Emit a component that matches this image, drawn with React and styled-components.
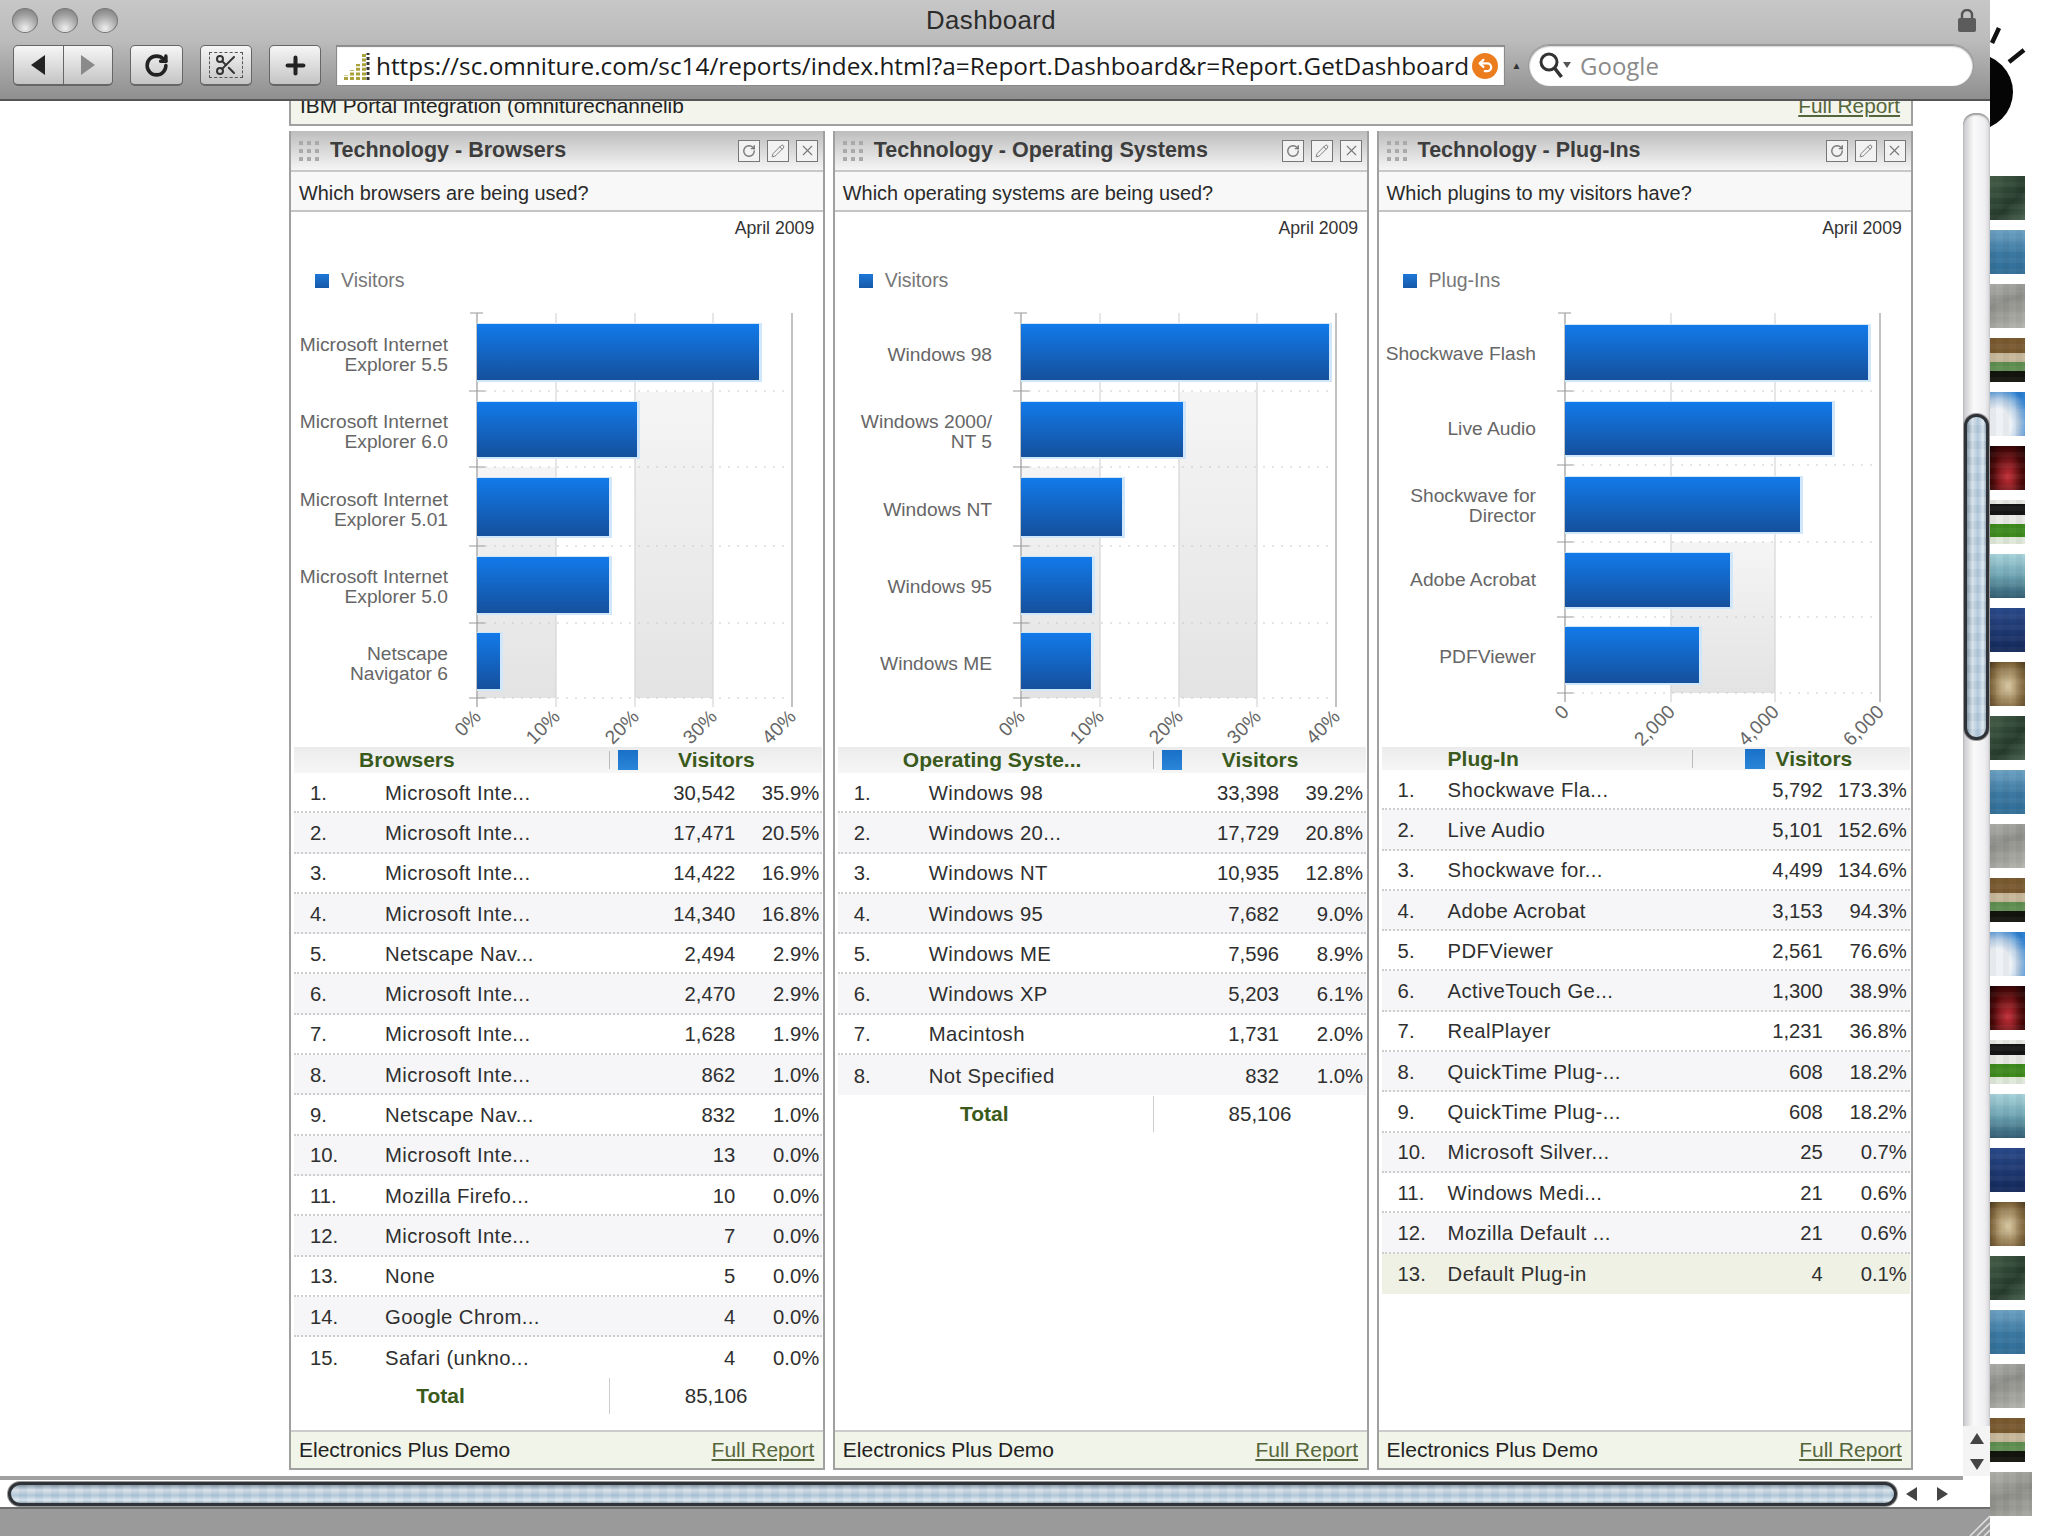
import styled, { createGlobalStyle, css } from "styled-components";
import { RotateCw, Scissors, Plus, Pencil, X, Undo2 } from "lucide-react";

const GlobalStyle = createGlobalStyle`
    html, body {
        margin: 0;
        padding: 0;
        background: #fff;
        font-family: "Liberation Sans", Arial, sans-serif;
    }
    * { box-sizing: border-box; }
`

const browsers = [
    ["Microsoft Inte...", "30,542", "35.9%"],
    ["Microsoft Inte...", "17,471", "20.5%"],
    ["Microsoft Inte...", "14,422", "16.9%"],
    ["Microsoft Inte...", "14,340", "16.8%"],
    ["Netscape Nav...", "2,494", "2.9%"],
    ["Microsoft Inte...", "2,470", "2.9%"],
    ["Microsoft Inte...", "1,628", "1.9%"],
    ["Microsoft Inte...", "862", "1.0%"],
    ["Netscape Nav...", "832", "1.0%"],
    ["Microsoft Inte...", "13", "0.0%"],
    ["Mozilla Firefo...", "10", "0.0%"],
    ["Microsoft Inte...", "7", "0.0%"],
    ["None", "5", "0.0%"],
    ["Google Chrom...", "4", "0.0%"],
    ["Safari (unkno...", "4", "0.0%"],
]

const systems = [
    ["Windows 98", "33,398", "39.2%"],
    ["Windows 20...", "17,729", "20.8%"],
    ["Windows NT", "10,935", "12.8%"],
    ["Windows 95", "7,682", "9.0%"],
    ["Windows ME", "7,596", "8.9%"],
    ["Windows XP", "5,203", "6.1%"],
    ["Macintosh", "1,731", "2.0%"],
    ["Not Specified", "832", "1.0%"],
]

const plugins = [
    ["Shockwave Fla...", "5,792", "173.3%"],
    ["Live Audio", "5,101", "152.6%"],
    ["Shockwave for...", "4,499", "134.6%"],
    ["Adobe Acrobat", "3,153", "94.3%"],
    ["PDFViewer", "2,561", "76.6%"],
    ["ActiveTouch Ge...", "1,300", "38.9%"],
    ["RealPlayer", "1,231", "36.8%"],
    ["QuickTime Plug-...", "608", "18.2%"],
    ["QuickTime Plug-...", "608", "18.2%"],
    ["Microsoft Silver...", "25", "0.7%"],
    ["Windows Medi...", "21", "0.6%"],
    ["Mozilla Default ...", "21", "0.6%"],
    ["Default Plug-in", "4", "0.1%"],
]

// row geometry is read off the reference, y values are page pixels
const percentRows = [
    { top: 324, h: 56, mid: 355, line: 391 },
    { top: 402, h: 55, mid: 432, line: 467 },
    { top: 478, h: 58, mid: 510, line: 546 },
    { top: 557, h: 56, mid: 587, line: 623 },
    { top: 633, h: 56, mid: 664, line: 698 },
]

const pluginRows = [
    { top: 325, h: 55, mid: 354, line: 391 },
    { top: 402, h: 53, mid: 429, line: 465 },
    { top: 477, h: 55, mid: 506, line: 542 },
    { top: 553, h: 54, mid: 580, line: 617 },
    { top: 627, h: 56, mid: 657, line: 693 },
]

const percentTicks = [
    { x: 187, label: "0%" },
    { x: 266, label: "10%" },
    { x: 345, label: "20%" },
    { x: 423, label: "30%" },
    { x: 502, label: "40%" },
]

const pluginTicks = [
    { x: 187, label: "0" },
    { x: 293, label: "2,000" },
    { x: 397, label: "4,000" },
    { x: 502, label: "6,000" },
]

const panels = [
    {
        title: "Technology - Browsers",
        question: "Which browsers are being used?",
        legend: "Visitors",
        column: "Browsers",
        rows: browsers,
        total: "85,106",
        rowsChart: percentRows,
        ticks: percentTicks,
        bands: [
            { x: 345, w: 78, y: 392, h: 306 },
            { x: 187, w: 79, y: 467, h: 231 },
        ],
        bars: [
            { w: 282, label: ["Microsoft Internet", "Explorer 5.5"] },
            { w: 160, label: ["Microsoft Internet", "Explorer 6.0"] },
            { w: 132, label: ["Microsoft Internet", "Explorer 5.01"] },
            { w: 132, label: ["Microsoft Internet", "Explorer 5.0"] },
            { w: 23, label: ["Netscape", "Navigator 6"] },
        ],
    },
    {
        title: "Technology - Operating Systems",
        question: "Which operating systems are being used?",
        legend: "Visitors",
        column: "Operating Syste...",
        rows: systems,
        total: "85,106",
        rowsChart: percentRows,
        ticks: percentTicks,
        bands: [
            { x: 345, w: 78, y: 392, h: 306 },
            { x: 187, w: 79, y: 467, h: 231 },
        ],
        bars: [
            { w: 308, label: ["Windows 98"] },
            { w: 162, label: ["Windows 2000/", "NT 5"] },
            { w: 101, label: ["Windows NT"] },
            { w: 71, label: ["Windows 95"] },
            { w: 70, label: ["Windows ME"] },
        ],
    },
    {
        title: "Technology - Plug-Ins",
        question: "Which plugins to my visitors have?",
        legend: "Plug-Ins",
        column: "Plug-In",
        rows: plugins,
        compact: true,
        rowsChart: pluginRows,
        ticks: pluginTicks,
        bands: [{ x: 293, w: 104, y: 542, h: 151 }],
        bars: [
            { w: 303, label: ["Shockwave Flash"] },
            { w: 267, label: ["Live Audio"] },
            { w: 235, label: ["Shockwave for", "Director"] },
            { w: 165, label: ["Adobe Acrobat"] },
            { w: 134, label: ["PDFViewer"] },
        ],
    },
]

const scenes = [
    "linear-gradient(135deg,#46604a,#263a2b 60%,#4a6350)",
    "linear-gradient(180deg,#6fa3c4,#3d7aa3 50%,#2f6d96)",
    "linear-gradient(160deg,#b0b0ac,#8e8e8a 40%,#b6b6b0)",
    "linear-gradient(180deg,#7a5a30 0 35%,#c7b79a 35% 55%,#5f8f50 55% 75%,#14140f 75%)",
    "radial-gradient(ellipse at 20% 75%,#eef2f6 0 35%,#b4cce4 55%,#2a7fd0 85%)",
    "radial-gradient(ellipse at 50% 70%,#c8303a,#4a0808 60%,#1a0406)",
    "linear-gradient(180deg,#e8e8e4 0 10%,#151515 10% 35%,#e8e8e4 35% 55%,#3e8a1e 55% 85%,#dfe8d8 85%)",
    "linear-gradient(180deg,#a8d4dc,#6ea4b2 50%,#2c5a70)",
    "linear-gradient(180deg,#2a4a8a,#13285a)",
    "radial-gradient(ellipse at 50% 55%,#e0cfa8,#7c6238 70%,#4a3a20)",
]

const thumbs = Array.from({ length: 24 }, (_, i) => scenes[i % 10])

function Chart({ data, index }) {
    const x0 = data.ticks[0].x
    const xEnd = data.ticks[data.ticks.length - 1].x
    const axisEnd = data.rowsChart[4].line
    return (
        <ChartSvg viewBox="1 300 532 447" width="532" height="447">
            <defs>
                <linearGradient id={"bar" + index} x1="0" y1="0" x2="0" y2="1">
                    <stop offset="0" stopColor="#127aea" />
                    <stop offset="1" stopColor="#15509c" />
                </linearGradient>
                <linearGradient id={"band" + index} x1="0" y1="0" x2="0" y2="1">
                    <stop offset="0" stopColor="#f5f5f5" />
                    <stop offset="1" stopColor="#e3e3e4" />
                </linearGradient>
            </defs>
            {data.bands.map((b, i) => (
                <rect key={i} x={b.x} y={b.y} width={b.w} height={b.h} fill={`url(#band${index})`} />
            ))}
            {data.ticks.map((t, i) => (
                <line key={i} x1={t.x} y1="313" x2={t.x} y2={axisEnd + 9}
                      stroke={i === data.ticks.length - 1 || i === 0 ? "#9a9a9a" : "#d6d6d6"}
                      strokeWidth="1.2" />
            ))}
            <line x1={x0 - 7} y1="313" x2={x0 + 6} y2="313" stroke="#999" />
            {data.rowsChart.map((r, i) => (
                <g key={i}>
                    <line x1={x0 - 8} y1={r.line} x2={x0 + 8} y2={r.line} stroke="#999" />
                    <line x1={x0 + 8} y1={r.line} x2={xEnd - 3} y2={r.line} stroke="#c9c9c9"
                          strokeDasharray="2 7" />
                </g>
            ))}
            {data.bars.map((bar, i) => {
                const r = data.rowsChart[i]
                return (
                    <g key={i}>
                        <rect x={x0} y={r.top - 1} width={bar.w + 3} height={r.h + 3} fill="#cfe6fb" />
                        <rect x={x0} y={r.top} width={bar.w} height={r.h} fill={`url(#bar${index})`} />
                        {bar.label.map((line, j) => (
                            <ChartLabel key={j} x={x0 - 29} textAnchor="end"
                                        y={r.mid + 6 + (j - (bar.label.length - 1) / 2) * 20.5}>
                                {line}
                            </ChartLabel>
                        ))}
                    </g>
                )
            })}
            {data.ticks.map((t, i) => (
                <ChartLabel key={i} textAnchor="end" x={t.x + 5} y={axisEnd + 20}
                            transform={`rotate(-45 ${t.x + 5} ${axisEnd + 20})`}>
                    {t.label}
                </ChartLabel>
            ))}
        </ChartSvg>
    )
}

function Panel({ data, index }) {
    return (
        <PanelBox>
            <PanelHeader>
                <DragDots>
                    {Array.from({ length: 9 }, (_, i) => <i key={i} />)}
                </DragDots>
                <PanelTitle>{data.title}</PanelTitle>
                <PanelButtons>
                    <PanelButton><RotateCw size={14} strokeWidth={2.4} /></PanelButton>
                    <PanelButton><Pencil size={14} strokeWidth={1.6} /></PanelButton>
                    <PanelButton><X size={17} strokeWidth={1.6} /></PanelButton>
                </PanelButtons>
            </PanelHeader>
            <Question>{data.question}</Question>
            <ChartBody>
                <ReportDate>April 2009</ReportDate>
                <Legend>
                    <LegendSwatch />
                    {data.legend}
                </Legend>
                <Chart data={data} index={index} />
            </ChartBody>
            <Table>
                <TableHead $compact={data.compact}>
                    <HeadName $compact={data.compact}>{data.column}</HeadName>
                    <HeadRule />
                    <HeadSwatch $compact={data.compact} />
                    <HeadName $metric $compact={data.compact}>Visitors</HeadName>
                </TableHead>
                {data.rows.map((row, i) => (
                    <Row key={i} $shaded={i % 2 === 1} $compact={data.compact}
                         $highlight={data.compact && i === data.rows.length - 1}>
                        <span>{i + 1}.</span>
                        <RowName>{row[0]}</RowName>
                        <Num>{row[1]}</Num>
                        <Num>{row[2]}</Num>
                    </Row>
                ))}
                {data.total && (
                    <TotalRow>
                        <TotalLabel>Total</TotalLabel>
                        <TotalRule />
                        <TotalValue>{data.total}</TotalValue>
                    </TotalRow>
                )}
            </Table>
            <PanelFooter>
                Electronics Plus Demo
                <FullReport href="#">Full Report</FullReport>
            </PanelFooter>
        </PanelBox>
    )
}

export default function App() {
    return (
        <Desktop>
            <GlobalStyle />
            <Window>
                <Toolbar>
                    <TitleBar>
                        <Lights><Light /><Light /><Light /></Lights>
                        <WindowTitle>Dashboard</WindowTitle>
                        <svg width="18" height="23" viewBox="0 0 18 23">
                            <path d="M4 10V6a5 5 0 0 1 10 0v4" fill="none" stroke="#555" strokeWidth="2.4" />
                            <rect x="0" y="9" width="18" height="14" rx="2" fill="#5c5c5c" />
                        </svg>
                    </TitleBar>
                    <NavRow>
                        <NavGroup>
                            <NavHalf>
                                <svg width="16" height="22" viewBox="0 0 16 22"><path d="M15 1v20L1 11z" fill="#222" /></svg>
                            </NavHalf>
                            <NavHalf $off>
                                <svg width="16" height="22" viewBox="0 0 16 22"><path d="M1 1v20l14-10z" fill="#8a8a8a" /></svg>
                            </NavHalf>
                        </NavGroup>
                        <NavButton $w={53}><RotateCw size={25} strokeWidth={3.4} color="#222" /></NavButton>
                        <NavButton $w={52}>
                            <ClipFrame><Scissors size={24} strokeWidth={2} color="#333" /></ClipFrame>
                        </NavButton>
                        <NavButton $w={52}><Plus size={27} strokeWidth={3.6} color="#222" /></NavButton>
                        <AddressBar>
                            <svg width="26" height="30" viewBox="0 0 26 30">
                                <path d="M2 29v-5M8 29v-10M14 29v-16M20 29V2" fill="none" stroke="#a9a23a" strokeWidth="4" strokeDasharray="3 1.6" />
                                <path d="M24 29V2" fill="none" stroke="#333" strokeWidth="3" strokeDasharray="3 2" />
                            </svg>
                            <AddressText>https://sc.omniture.com/sc14/reports/index.html?a=Report.Dashboard&amp;r=Report.GetDashboard</AddressText>
                            <SnapBack><Undo2 size={17} strokeWidth={3.2} color="#fff" /></SnapBack>
                        </AddressBar>
                        <Grip>▲</Grip>
                        <SearchBox>
                            <svg width="34" height="30" viewBox="0 0 34 30">
                                <circle cx="11" cy="11" r="8" fill="none" stroke="#333" strokeWidth="3" />
                                <path d="M16.5 17l7 9" stroke="#333" strokeWidth="3.6" />
                                <path d="M25 11h8l-4 6z" fill="#555" />
                            </svg>
                            <SearchText>Google</SearchText>
                        </SearchBox>
                    </NavRow>
                </Toolbar>
                <Body>
                    <Viewport>
                        <Page>
                            <TopStrip>
                                IBM Portal Integration (omniturechannelib
                                <FullReport href="#">Full Report</FullReport>
                            </TopStrip>
                            <Panels>
                                {panels.map((p, i) => <Panel key={i} data={p} index={i} />)}
                            </Panels>
                        </Page>
                        <HScroll>
                            <HThumb />
                            <ScrollArrows>
                                <svg width="12" height="14" viewBox="0 0 12 14"><path d="M11 0v14L0 7z" fill="#444" /></svg>
                                <svg width="12" height="14" viewBox="0 0 12 14"><path d="M1 0v14l11-7z" fill="#444" /></svg>
                            </ScrollArrows>
                        </HScroll>
                    </Viewport>
                    <VScroll>
                        <VGroove>
                            <VThumb />
                        </VGroove>
                        <VArrows>
                            <svg width="14" height="12" viewBox="0 0 14 12"><path d="M0 11h14L7 0z" fill="#444" /></svg>
                            <svg width="14" height="12" viewBox="0 0 14 12"><path d="M0 1h14L7 12z" fill="#444" /></svg>
                        </VArrows>
                    </VScroll>
                </Body>
                <StatusBar>
                    <svg width="22" height="22" viewBox="0 0 22 22">
                        <path d="M2 22L22 2M9 22L22 9M16 22l6-6" stroke="#ddd" strokeWidth="1.6" />
                    </svg>
                </StatusBar>
            </Window>
            <Backdrop>
                <svg width="58" height="131" viewBox="0 0 58 131">
                    <circle cx="-15" cy="92" r="38" fill="#050505" />
                    <path d="M2 43L9 28M19 62l15-12" stroke="#111" strokeWidth="4.5" />
                </svg>
                <ThumbList>
                    {thumbs.map((scene, i) => <Thumb key={i} $scene={scene} />)}
                    <Thumb $scene="linear-gradient(160deg,#b4b4ae,#8f8f8a 50%,#a8a8a2)" $wide />
                </ThumbList>
            </Backdrop>
        </Desktop>
    )
}

const Desktop = styled.div`
    display: flex;
    width: 2048px;
    height: 1536px;
    overflow: hidden;
    background: #fff;
`

const Window = styled.div`
    display: flex;
    flex-direction: column;
    width: 1990px;
    height: 1536px;
`

const Toolbar = styled.header`
    height: 101px;
    flex: none;
    padding: 0 14px 0 12px;
    background: linear-gradient(180deg, #c7c7c7 0%, #bcbcbc 40%, #8f8f8f 100%);
    border-bottom: 2px solid #555;
`

const TitleBar = styled.div`
    display: flex;
    align-items: center;
    justify-content: space-between;
    height: 41px;
    position: relative;
`

const Lights = styled.div`
    display: flex;
    gap: 14px;
`

const Light = styled.span`
    width: 26px;
    height: 25px;
    border-radius: 50%;
    border: 1.5px solid #777;
    background: radial-gradient(circle at 50% 85%, #eee, #a0a0a0 60%, #777);
`

const WindowTitle = styled.h1`
    position: absolute;
    left: 0;
    right: 6px;
    margin: 0;
    text-align: center;
    font-size: 25.8px;
    font-weight: 400;
    color: #2c2c2c;
    letter-spacing: 0.4px;
`

const NavRow = styled.div`
    display: flex;
    align-items: center;
    height: 43px;
    margin-top: 3px;
`

const NavGroup = styled.div`
    display: flex;
    width: 100px;
    height: 41px;
    margin-left: 1px;
    border: 1.5px solid #666;
    border-bottom-width: 2.5px;
    border-radius: 5px;
    overflow: hidden;
    background: linear-gradient(180deg, #f6f6f6, #c4c4c4);
`

const NavHalf = styled.span`
    flex: 1;
    display: flex;
    align-items: center;
    justify-content: center;
    ${p => p.$off ? css`border-left: 1.5px solid #666;` : ""}
`

const NavButton = styled.span`
    display: flex;
    align-items: center;
    justify-content: center;
    width: ${p => p.$w}px;
    height: 41px;
    margin-left: 17px;
    border: 1.5px solid #666;
    border-bottom-width: 2.5px;
    border-radius: 5px;
    background: linear-gradient(180deg, #f6f6f6, #c4c4c4);
`

const ClipFrame = styled.span`
    display: flex;
    align-items: center;
    justify-content: center;
    width: 34px;
    height: 26px;
    border: 1.5px dashed #555;
`

const AddressBar = styled.div`
    display: flex;
    align-items: center;
    width: 1167px;
    height: 39px;
    margin-left: 16px;
    padding-left: 7px;
    background: #fff;
    box-shadow: inset 0 1px 1px #888, 0 0 0 1px #8a8a8a;
`

const AddressText = styled.span`
    margin-left: 6px;
    font-family: "Open Sans", sans-serif;
    font-size: 24.35px;
    color: #1a1a1a;
    white-space: nowrap;
    width: 1093px;
    overflow: hidden;
`

const SnapBack = styled.span`
    display: flex;
    align-items: center;
    justify-content: center;
    width: 26px;
    height: 26px;
    margin-left: 3px;
    border-radius: 50%;
    background: #ec7d1f;
`

const Grip = styled.span`
    width: 25px;
    text-align: center;
    font-size: 10px;
    color: #333;
`

const SearchBox = styled.div`
    display: flex;
    align-items: center;
    width: 444px;
    height: 41px;
    padding-left: 9px;
    border-radius: 21px;
    background: #fff;
    box-shadow: inset 0 1px 2px #777, 0 0 0 1px #999;
`

const SearchText = styled.span`
    margin-left: 8px;
    font-family: "Open Sans", sans-serif;
    font-size: 24px;
    color: #8b8b8b;
`

const Body = styled.div`
    flex: 1;
    display: flex;
    min-height: 0;
`

const Viewport = styled.div`
    flex: 1;
    display: flex;
    flex-direction: column;
    min-width: 0;
`

const Page = styled.main`
    flex: 1;
    padding-left: 289px;
    min-height: 0;
    overflow: hidden;
`

const TopStrip = styled.div`
    display: flex;
    align-items: flex-end;
    justify-content: space-between;
    width: 1624px;
    height: 25px;
    padding: 0 11px 9px 9px;
    background: #f3f5ec;
    border: 2px solid #a0a0a0;
    border-width: 0 2px 2px;
    font-size: 20.8px;
    line-height: 18px;
    color: #222;
    overflow: hidden;
`

const Panels = styled.div`
    display: grid;
    grid-template-columns: repeat(3, 536.3px);
    column-gap: 7.5px;
    height: 1339px;
    margin-top: 5px;
`

const PanelBox = styled.section`
    display: flex;
    flex-direction: column;
    background: #fff;
    border: 2px solid #a0a0a0;
    border-top: 0;
`

const PanelHeader = styled.div`
    display: flex;
    align-items: center;
    flex: none;
    height: 41px;
    padding: 0 5px 0 8px;
    background: linear-gradient(180deg, #bdbdbd, #f5f5f5);
    border-bottom: 2px solid #c8c8c8;
`

const DragDots = styled.span`
    display: grid;
    grid-template-columns: repeat(3, 4px);
    gap: 4px;
    margin-right: 11px;
    & > i {
        width: 4px;
        height: 4px;
        background: #aaa;
    }
`

const PanelTitle = styled.h2`
    flex: 1;
    margin: 0;
    font-size: 21.5px;
    font-weight: 700;
    color: #3d3d3d;
`

const PanelButtons = styled.div`
    display: flex;
    gap: 7px;
`

const PanelButton = styled.span`
    display: flex;
    align-items: center;
    justify-content: center;
    width: 22px;
    height: 22px;
    border: 1.5px solid #777;
    background: #f2f2f2;
    color: #777;
`

const Question = styled.div`
    flex: none;
    height: 40px;
    padding: 4px 8px 0;
    line-height: 34px;
    font-size: 19.9px;
    color: #2a2a2a;
    background: #f8f8f8;
    border-bottom: 2px solid #c4c4c4;
`

const ChartBody = styled.div`
    flex: none;
    height: 535px;
    display: flex;
    flex-direction: column;
`

const ReportDate = styled.div`
    height: 30px;
    padding: 1px 9px 0 0;
    text-align: right;
    line-height: 30px;
    font-size: 17.7px;
    color: #333;
`

const Legend = styled.div`
    display: flex;
    align-items: center;
    height: 58px;
    padding: 19px 0 0 24px;
    font-size: 19.5px;
    color: #777;
`

const LegendSwatch = styled.span`
    width: 14px;
    height: 14px;
    margin-right: 12px;
    background: linear-gradient(180deg, #1e78d8, #1558a8);
`

const ChartSvg = styled.svg`
    display: block;
    flex: none;
    overflow: visible;
`

const ChartLabel = styled.text`
    font-family: "Liberation Sans", Arial, sans-serif;
    font-size: 19.2px;
    fill: #666;
`

const Table = styled.div`
    flex: 1;
    min-height: 0;
    margin: 0 1px 0 3px;
`

const TableHead = styled.div`
    display: flex;
    align-items: center;
    height: ${p => p.$compact ? 23 : 26}px;
    background: linear-gradient(180deg, #ececec, #f6f6f6);
`

const HeadName = styled.span`
    font-size: 21px;
    font-weight: 700;
    color: #3a5a1c;
    white-space: nowrap;
    ${p => p.$metric
        ? css`margin-left: ${p.$compact ? 11 : 40}px;`
        : css`width: ${p.$compact ? 244 : 250}px; margin-left: ${p.$compact ? 66 : 65}px;`}
`

const HeadRule = styled.span`
    width: 1px;
    height: 18px;
    background: #bbb;
`

const HeadSwatch = styled.span`
    width: 20px;
    height: 20px;
    margin-left: ${p => p.$compact ? 52 : 8}px;
    background: linear-gradient(180deg, #1a70c8, #2a86d8);
`

const Row = styled.div`
    display: grid;
    grid-template-columns: ${p => p.$compact ? "50px 1fr" : "75px 1fr"} 110px 84px;
    align-items: center;
    height: 40.3px;
    padding: 2px 3px 0 16px;
    font-size: 20.3px;
    color: #2f2f2f;
    background: ${p => p.$highlight ? "#eef1e3" : p.$shaded ? "#f6f6f8" : "#fff"};
    border-bottom: ${p => p.$highlight ? "none" : "2px dotted #cdcdcd"};
    &:nth-last-child(2) { border-bottom: ${p => p.$compact ? "" : "none"}; }
`

const RowName = styled.span`
    letter-spacing: 0.4px;
`

const Num = styled.span`
    text-align: right;
`

const TotalRow = styled.div`
    display: grid;
    grid-template-columns: 315px 1px 1fr;
    align-items: center;
    height: 38px;
`

const TotalLabel = styled.span`
    padding-right: 22px;
    text-align: center;
    font-size: 21px;
    font-weight: 700;
    color: #3a5a1c;
`

const TotalRule = styled.span`
    height: 36px;
    background: #ccc;
`

const TotalValue = styled.span`
    text-align: center;
    font-size: 20.5px;
    color: #2f2f2f;
`

const PanelFooter = styled.footer`
    display: flex;
    align-items: center;
    justify-content: space-between;
    flex: none;
    height: 38px;
    padding: 0 9px 0 8px;
    background: #f1f4e8;
    border-top: 2px solid #ccc;
    font-size: 21px;
    color: #222;
`

const FullReport = styled.a`
    color: #56663c;
    text-decoration: underline;
`

const aquaThumb = css`
    border: 3px solid #2f3338;
    box-shadow: 0 0 0 1px #999;
    background-color: #c9d7e3;
`

const HScroll = styled.div`
    display: flex;
    align-items: center;
    flex: none;
    height: 31px;
    padding: 4px 0 0 8px;
    background: linear-gradient(180deg, #a0a0a0 0 4px, #fff 4px);
`

const HThumb = styled.div`
    ${aquaThumb}
    flex: 1;
    height: 24px;
    border-radius: 12px;
    background-image:
        repeating-linear-gradient(90deg, rgba(255, 255, 255, 0.1) 0 8px, rgba(110, 140, 165, 0.06) 8px 16px),
        linear-gradient(180deg, #7f94a5 0%, #d6e0e8 28%, #aac2d5 58%, #dde7ef 85%, #93a6b6 100%);
`

const ScrollArrows = styled.div`
    display: flex;
    align-items: center;
    justify-content: space-around;
    width: 66px;
    padding-right: 6px;
`

const VScroll = styled.aside`
    display: flex;
    flex-direction: column;
    flex: none;
    width: 27px;
    padding-bottom: 31px;
    background: #fff;
`

const VGroove = styled.div`
    flex: 1;
    margin-top: 12px;
    padding: 301px 1px 0;
    border-radius: 12px 12px 0 0;
    background: linear-gradient(90deg, #c6c6cc, #fafafa 40%, #efeff2 80%, #d8d8dc);
    box-shadow: inset 0 2px 2px #999;
`

const VThumb = styled.div`
    ${aquaThumb}
    height: 326px;
    border-radius: 12px;
    background-image:
        repeating-linear-gradient(180deg, rgba(255, 255, 255, 0.1) 0 8px, rgba(110, 140, 165, 0.06) 8px 16px),
        linear-gradient(90deg, #7f94a5 0%, #d6e0e8 28%, #aac2d5 58%, #dde7ef 85%, #93a6b6 100%);
`

const VArrows = styled.div`
    display: flex;
    flex-direction: column;
    align-items: center;
    justify-content: space-around;
    flex: none;
    height: 50px;
    background: #f4f4f4;
`

const StatusBar = styled.footer`
    display: flex;
    align-items: flex-end;
    justify-content: flex-end;
    flex: none;
    height: 29px;
    background: #9a9a9a;
    border-top: 2px solid #6d6d6d;
`

const Backdrop = styled.div`
    flex: 1;
    min-width: 0;
`

const ThumbList = styled.div`
    display: flex;
    flex-direction: column;
    margin-top: 41px;
    gap: 10px;
`

const Thumb = styled.div`
    flex: none;
    width: ${p => p.$wide ? 42 : 35}px;
    height: 44px;
    background:
        repeating-linear-gradient(90deg, rgba(0, 0, 0, 0.04) 0 6px, transparent 6px 13px),
        repeating-linear-gradient(0deg, rgba(255, 255, 255, 0.04) 0 5px, transparent 5px 11px),
        ${p => p.$scene};
`
